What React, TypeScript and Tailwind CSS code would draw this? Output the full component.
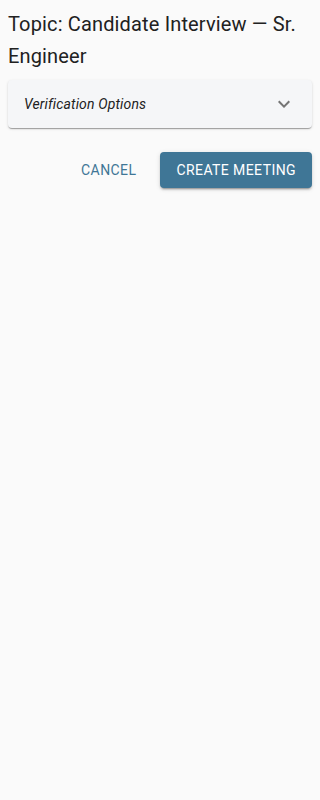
import React, { useState } from 'react';

const Chevron = ({ open }: { open: boolean }) => (
  <svg viewBox="0 0 24 24" className={open ? 'w-6 h-6 rotate-180' : 'w-6 h-6'} fill="#757575">
    <path d="M16.59 8.59 12 13.17 7.41 8.59 6 10l6 6 6-6z" />
  </svg>
);

const App: React.FC = () => {
  const [open, setOpen] = useState(false);

  return (
    <div className="min-h-screen bg-[#fafafa] p-2" style={{ fontFamily: 'Roboto, "Noto Sans", sans-serif' }}>
      <h2 className="text-[20px] leading-[32px] font-normal text-[#212121] tracking-[0.0075em]">
        Topic: Candidate Interview — Sr. Engineer
      </h2>

      <div className="mt-2 bg-[#f5f6f8] rounded shadow-[0_2px_1px_-1px_rgba(0,0,0,0.2),0_1px_1px_0_rgba(0,0,0,0.14),0_1px_3px_0_rgba(0,0,0,0.12)]">
        <button
          onClick={() => setOpen(!open)}
          className="w-full h-12 flex items-center justify-between pl-4 pr-4 text-left"
        >
          <span className="italic text-[14px] text-[#212121] tracking-[0.01em]">Verification Options</span>
          <Chevron open={open} />
        </button>
        {open && (
          <div className="px-4 pb-4 text-sm text-gray-700">No options configured.</div>
        )}
      </div>

      <div className="mt-6 flex items-center justify-end gap-4">
        <button className="h-9 px-2 rounded text-[14px] font-normal uppercase tracking-[0.03em] text-[#3f7696]">
          Cancel
        </button>
        <button className="h-9 px-4 rounded text-[14px] font-normal uppercase tracking-[0.03em] text-white bg-[#3f7696] shadow-[0_3px_1px_-2px_rgba(0,0,0,0.2),0_2px_2px_0_rgba(0,0,0,0.14),0_1px_5px_0_rgba(0,0,0,0.12)]">
          Create Meeting
        </button>
      </div>
    </div>
  );
};

export default App;
